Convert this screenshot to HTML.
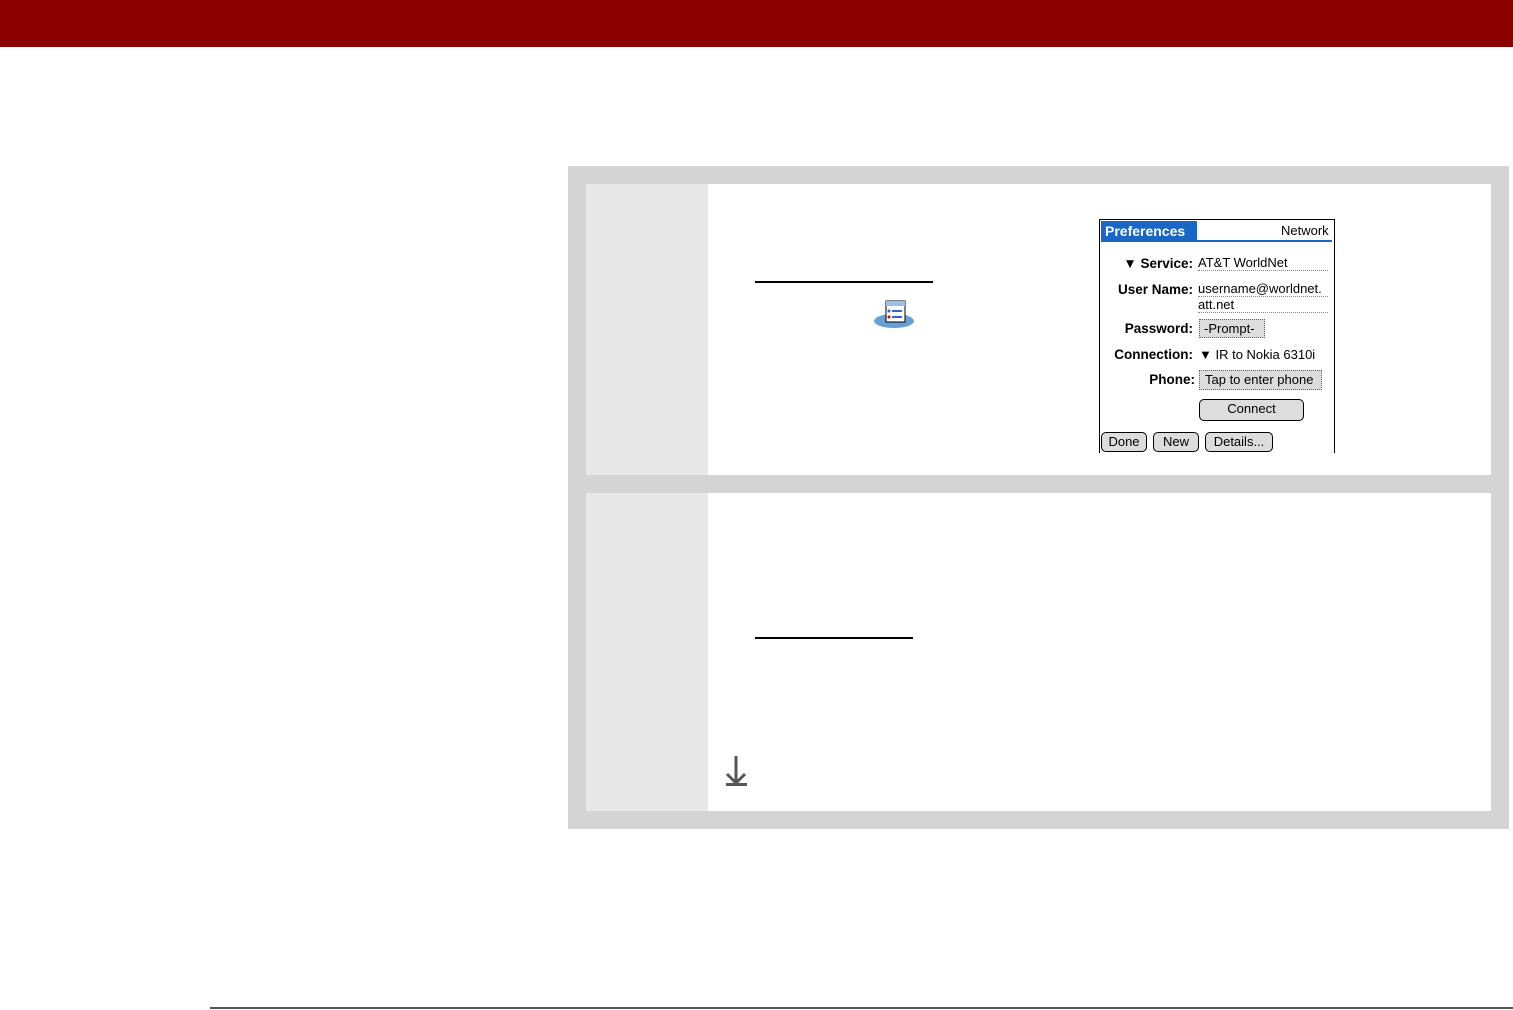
<!DOCTYPE html>
<html><head><style>
body{margin:0;width:1513px;height:1010px;position:relative;background:#fff;font-family:"Liberation Sans",sans-serif;overflow:hidden}
.a{position:absolute}
.pd{font-size:13px;color:#000;white-space:nowrap}
.lb{position:absolute;right:320px;font-size:13.5px;font-weight:bold;white-space:nowrap;text-align:right}
.dot{border-bottom:1px dotted #888}
.btn{position:absolute;border:1.5px solid #000;border-radius:5px;background:#ddd;font-size:13px;text-align:center;box-sizing:border-box;line-height:17px}
</style></head><body>
<div class="a" style="left:0;top:0;width:1513px;height:47px;background:#8b0000"></div>
<div class="a" style="left:568px;top:166px;width:941px;height:663px;background:#d4d4d4"></div>
<div class="a" style="left:586px;top:184px;width:122px;height:291px;background:#e8e8e8"></div>
<div class="a" style="left:708px;top:184px;width:783px;height:291px;background:#fff"></div>
<div class="a" style="left:586px;top:493px;width:122px;height:318px;background:#e8e8e8"></div>
<div class="a" style="left:708px;top:493px;width:783px;height:318px;background:#fff"></div>
<div class="a" style="left:755px;top:281px;width:178px;height:2px;background:#000"></div>
<div class="a" style="left:755px;top:637px;width:158px;height:2px;background:#000"></div>
<svg class="a" style="left:872px;top:298px" width="44" height="32"><ellipse cx="22" cy="23" rx="20" ry="7" fill="#6a9fd4"/><rect x="14" y="3" width="19" height="21" fill="#fff" stroke="#000"/><rect x="14" y="3" width="19" height="5" fill="#9cc0ea"/><circle cx="17" cy="13" r="1.5" fill="#36c"/><circle cx="17" cy="19" r="1.5" fill="#c00"/><rect x="20" y="12" width="10" height="2" fill="#36c"/><rect x="20" y="18" width="10" height="2" fill="#36c"/></svg>
<svg class="a" style="left:725px;top:755px" width="24" height="32"><path d="M11 1v27M2 19l9 9 9-9" stroke="#555" stroke-width="3" fill="none"/><rect x="1" y="28" width="21" height="3" fill="#555"/></svg>
<div class="a" style="left:1099px;top:219px;width:236px;height:234px;background:#fff;border-left:1px solid #000;border-right:1px solid #000;border-top:1px solid #000;box-sizing:border-box"></div>
<div class="a" style="left:1101px;top:221px;width:96px;height:20px;background:#1a66c4;color:#fff;font-weight:bold;font-size:14px;line-height:20px;padding-left:4px;box-sizing:border-box">Preferences</div>
<div class="a" style="left:1101px;top:240px;width:231px;height:2px;background:#1a66c4"></div>
<div class="a pd" style="left:1281px;top:223px">Network</div>
<div class="lb" style="top:256px">▼ Service:</div>
<div class="a pd dot" style="left:1198px;top:255px;width:130px">AT&amp;T WorldNet</div>
<div class="lb" style="top:282px">User Name:</div>
<div class="a pd dot" style="left:1198px;top:281px;width:130px">username@worldnet.</div>
<div class="a pd dot" style="left:1198px;top:297px;width:130px">att.net</div>
<div class="lb" style="top:321px">Password:</div>
<div class="a pd" style="left:1199px;top:319px;width:66px;height:19px;box-sizing:border-box;border:1px dotted #666;background:#ddd;padding:1px 4px">-Prompt-</div>
<div class="lb" style="top:347px">Connection:</div>
<div class="a pd" style="left:1199px;top:347px">▼ IR to Nokia 6310i</div>
<div class="lb" style="top:372px;right:318px">Phone:</div>
<div class="a pd" style="left:1199px;top:370px;width:123px;height:20px;box-sizing:border-box;border:1px dotted #666;background:#ddd;padding:1px 5px">Tap to enter phone</div>
<div class="btn" style="left:1199px;top:399px;width:105px;height:22px">Connect</div>
<div class="btn" style="left:1101px;top:432px;width:46px;height:20px">Done</div>
<div class="btn" style="left:1153px;top:432px;width:46px;height:20px">New</div>
<div class="btn" style="left:1205px;top:432px;width:68px;height:20px">Details...</div>
<div class="a" style="left:210px;top:1007px;width:1303px;height:2px;background:#555"></div>
</body></html>
